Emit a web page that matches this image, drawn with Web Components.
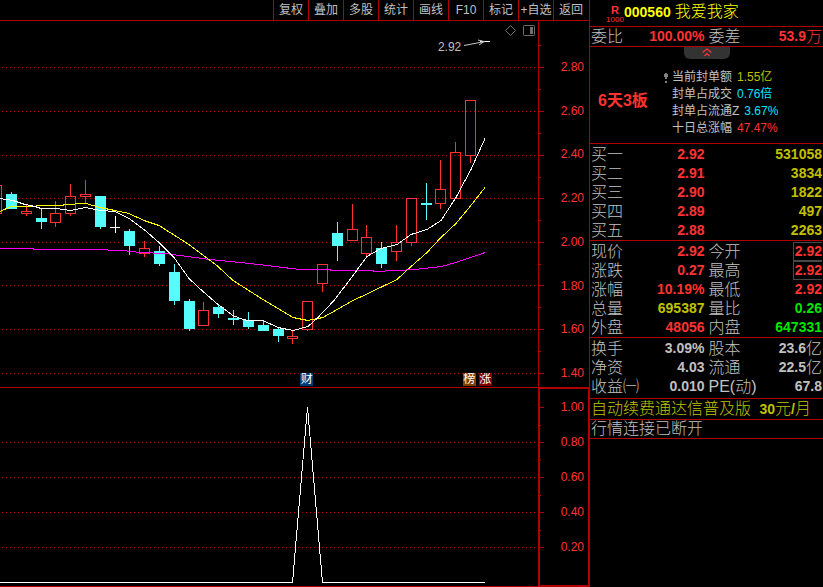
<!DOCTYPE html>
<html lang="zh-CN">
<head>
<meta charset="utf-8">
<title>我爱我家 000560</title>
<style>
html,body{margin:0;height:100%;background:#000}
body{font-family:"Liberation Sans","Noto Sans CJK SC",sans-serif;color:#c8c8c8;
--line:#b00000;--red:#ff3232;--yellow:#c0c000;--cyan:#00e6ff;--green:#00e600;--grey:#c0c0c0}
</style>
</head>
<body>
<stock-terminal></stock-terminal>
<script>
class Base extends HTMLElement{
  constructor(){super();this.attachShadow({mode:'open'})}
  connectedCallback(){this.shadowRoot.innerHTML='<style>'+this.css()+'</style>'+this.html()}
  css(){return ''}
  html(){return '<slot></slot>'}
}

customElements.define('tool-bar',class extends Base{
  css(){return `:host{display:flex;justify-content:flex-end;height:20px;border-bottom:1px solid var(--line);padding-right:1px}
  button{all:unset;box-sizing:border-box;width:35px;border-left:1px solid var(--line);font-size:12px;line-height:20px;text-align:center;white-space:nowrap;cursor:pointer;color:var(--grey)}`}
  html(){return this.getAttribute('items').split(',').map(t=>`<button type="button">${t}</button>`).join('')}
});

customElements.define('price-axis',class extends Base{
  css(){return `:host{display:grid;grid-template-columns:5px 1fr;grid-template-rows:minmax(0,1fr);box-sizing:border-box;border-left:1px solid var(--line)}
  :host([framed]){border:2px solid var(--line);border-right-width:1px}
  svg{width:5px;height:100%;display:block}
  ol{list-style:none;margin:0;padding:39px 5px 7px 0;display:flex;flex-direction:column;justify-content:space-between;text-align:right;font-size:12px;line-height:14px;color:var(--red)}
  :host([framed]) ol{padding:11px 4px 31px 0}`}
  html(){
    const framed=this.hasAttribute('framed'),h=framed?196:366;
    const major=framed?[18,53,88,123,158]:[46,90,134,177,221,264,308,352];
    const minor=framed?[36,71,106,141]:[24,68,112,156,199,243,286,330];
    const tick=(y,w)=>`<path d="M0 ${y+.5}H${w}"/>`;
    return `<svg viewBox="0 0 5 ${h}" preserveAspectRatio="none" stroke="#b00000" shape-rendering="crispEdges">${major.map(y=>tick(y,framed?4:5)).join('')}${minor.map(y=>tick(y,framed?1:2)).join('')}</svg>
    <ol>${this.getAttribute('values').split(',').map(v=>`<li>${v}</li>`).join('')}</ol>`;
  }
});

/* kind, left, body top, body bottom, high, low */
const CANDLES=[
['r',-9,185,213,185,213],['c',6,194,208,192,208],['r',21,211,213,205,215],['c',36,218,221,209,228],['r',50,213,222,201,226],
['r',65,196,213,184,215],['r',80,194,196,180,203],['c',95,196,226,196,228],['w',110,227,227,216,232],['c',124,231,245,229,254],
['r',139,248,253,241,256],['c',154,251,263,246,265],['c',169,272,300,264,304],['c',184,301,328,299,330],['r',198,310,325,302,325],
['c',213,307,313,305,317],['c',228,318,319,310,324],['c',243,320,326,312,328],['c',258,325,330,321,330],['c',273,329,335,327,341],
['r',287,336,338,330,343],['r',302,301,329,301,330],['r',317,264,283,264,291],['c',332,233,245,222,260],['r',347,229,240,204,240],
['r',361,237,253,225,256],['c',376,248,263,242,267],['r',391,242,251,225,260],['r',406,198,242,198,245],['c',421,203,204,183,219],
['r',435,189,203,160,208],['r',450,152,198,142,198],['r',465,100,155,100,162]];
const COLORS={r:'#ff3232',c:'#54fcfc',w:'#ffffff'};
const MA={
'#ffffff':'0,198 13,200 25,204 35,206 41,208 57,208 70,210 86,207 100,210 115,211 129,218 144,229 159,242 174,257 189,278 203,291 218,304 233,315 243,319 248,320 263,320 278,327 293,330 308,326 317,318 334,300 350,279 367,256 381,248 397,244 411,234 427,229 441,220 456,197 465,180 471,169 485,138',
'#ffff00':'0,211 11,206 62,205 65,204 86,203 100,207 115,210 129,213 144,220 159,225 170,232 189,244 218,266 233,280 263,299 293,317 308,320 323,317 330,313 353,300 368,293 397,279 411,266 427,252 441,237 456,223 470,206 485,187',
'#ff00ff':'0,248 33,248 34,249 92,249 123,250 140,252 165,253 180,255 210,259 250,263 300,269 330,269 331,270 373,270 374,271 397,270 415,269 441,266 456,262 485,252'};

customElements.define('candle-chart',class extends Base{
  css(){return `:host{display:block;position:relative;overflow:hidden;min-height:0}
  svg.plot{display:block;width:100%;height:100%}
  .peak{position:absolute;left:81.4%;top:5.2%;font-size:12px;line-height:14px;color:var(--grey)}
  .tag{position:absolute;bottom:1px;font-size:12px;line-height:13px;width:13px;height:13px;overflow:hidden;text-align:center;color:#fff}
  .tools{position:absolute;right:2px;top:3px;display:flex;gap:6px}
  .tools button{all:unset;display:block;height:13px;cursor:pointer}.tools svg{display:block}`}
  html(){
    const grid=[67,111,155,198,242,285,329,373].map(y=>`<path d="M2 ${y+.5}H538" stroke="#b00000" stroke-dasharray="1 3"/>`).join('');
    const bars=CANDLES.map(([k,x,t,b,hi,lo])=>{
      const c=COLORS[k],m=x+5;
      let s='';
      if(k==='r'){
        s+=`<rect x="${x+.5}" y="${t+.5}" width="10" height="${b-t}" fill="none" stroke="${c}"/>`;
        if(hi<t)s+=`<rect x="${m}" y="${hi}" width="1" height="${t-hi}" fill="${c}"/>`;
        if(lo>b)s+=`<rect x="${m}" y="${b+1}" width="1" height="${lo-b}" fill="${c}"/>`;
      }else{
        s+=`<rect x="${x}" y="${t}" width="${k==='w'?10:11}" height="${b-t+1}" fill="${c}"/><rect x="${m}" y="${hi}" width="1" height="${lo-hi+1}" fill="${c}"/>`;
      }
      return s}).join('');
    const lines=Object.entries(MA).reverse().map(([c,p])=>`<polyline points="${p}" transform="translate(0 .5)" fill="none" stroke="${c}"/>`).join('');
    return `<svg class="plot" viewBox="0 21 538 366" preserveAspectRatio="none" shape-rendering="crispEdges" aria-hidden="true">${grid}${bars}${lines}
      <path d="M480 41.5H490" stroke="#fff"/><g stroke="#c8c8c8" fill="none" shape-rendering="auto"><path d="M464 45.5L485 41.5M478 40L484 41.5L479 45"/></g></svg>
    <span class="peak">2.92</span>
    <span class="tag" style="left:55.8%;background:#003c74">财</span>
    <span class="tag" style="left:86%;background:#804000">榜</span>
    <span class="tag" style="left:89%;background:#800000">涨</span>
    <div class="tools"><button type="button" aria-label="标记"><svg width="13" height="13" fill="none" stroke="#707070"><path d="M6.5 1.5L11.5 6.5L6.5 11.5L1.5 6.5Z"/></svg></button>
    <button type="button" aria-label="侧栏"><svg width="13" height="13"><rect x=".5" y="1.5" width="11" height="10" rx="1" fill="none" stroke="#707070"/><rect x="7" y="3" width="3" height="7" fill="#707070"/></svg></button></div>`;
  }
});

customElements.define('signal-chart',class extends Base{
  css(){return `:host{display:block;min-height:0;overflow:hidden;border:solid var(--line);border-width:1px 0}
  svg{display:block;width:100%;height:100%}`}
  html(){return `<svg viewBox="0 388 538 198" preserveAspectRatio="none" shape-rendering="crispEdges" aria-hidden="true">
  ${[442,477,512,547].map(y=>`<path d="M2 ${y+.5}H538" stroke="#b00000" stroke-dasharray="1 3"/>`).join('')}
  <polyline points="0,582.5 292.5,582.5 307.5,407 322.5,582.5 485,582.5" fill="none" stroke="#fff"/></svg>`}
});

customElements.define('quote-block',class extends Base{
  css(){return `:host{display:block;border-bottom:1px solid var(--line);padding:1px 1px 0}`}
});
customElements.define('quote-row',class extends Base{
  css(){return `:host{display:grid;grid-template-columns:1fr 1fr;column-gap:4px;line-height:19px;height:19px}`}
});
customElements.define('quote-cell',class extends Base{
  css(){return `:host{display:flex;justify-content:space-between;align-items:center;font-size:16px;font-weight:300;white-space:nowrap;color:var(--grey)}
  .v{display:flex;align-items:center;font-weight:bold;font-size:14px;color:var(--tone,var(--grey))}
  .u{font-weight:300;font-size:16px}
  :host([tone=red]){--tone:var(--red)}:host([tone=yellow]){--tone:var(--yellow)}:host([tone=green]){--tone:var(--green)}
  :host([boxed]) .v{box-sizing:border-box;height:19px;border:1px solid #484848;border-right:0;padding-left:1px}`}
  html(){
    const l=this.getAttribute('label')||'',v=this.getAttribute('value')||'',u=this.getAttribute('unit')||'';
    return `<span>${l}</span><span class="v">${v}${u?`<span class="u">${u}</span>`:''}</span>`;
  }
});

customElements.define('stock-title',class extends Base{
  css(){return `:host{display:flex;align-items:center;height:26px;padding-left:16px;border-bottom:1px solid var(--line);color:#ff0}
  .r{display:flex;flex-direction:column;align-items:center;width:18px;color:var(--red);font-size:8px;line-height:9px;margin-top:3px}
  .r b{font-size:11px}
  h1{display:flex;align-items:center;gap:4px;margin:0;font-size:16px;line-height:24px;padding-bottom:2px;font-weight:300}
  h1 b{font-size:14px;font-weight:700}`}
  html(){return `<span class="r"><b>R</b><span>1000</span></span><h1><b>000560</b><span>我爱我家</span></h1>`}
});

customElements.define('limit-summary',class extends Base{
  css(){return `:host{display:flex;align-items:center;position:relative;height:96px;border-bottom:1px solid var(--line)}
  .tab{all:unset;position:absolute;top:0;left:50%;transform:translateX(-50%);width:46px;height:12px;background:#333;border-radius:0 0 6px 6px;display:flex;justify-content:center;cursor:pointer}
  strong{width:74px;padding:8px 0 0 8px;box-sizing:border-box;font-size:16px;white-space:nowrap;color:var(--red)}
  ul{list-style:none;margin:0;padding:18px 0 2px;font-size:12px;line-height:17px;color:var(--grey)}
  li{display:flex;gap:5px;white-space:nowrap}
  .i{width:8px;display:flex;align-items:center}
  .n{display:flex}
  .y{color:var(--yellow)}.c{color:var(--cyan)}.d{color:var(--red)}`}
  html(){
    const pin='<svg width="4" height="10" fill="#808080"><path d="M1 0h2v1h1v3H3v2H1V4H0V1h1zM1 8h2v2H1z"/></svg>';
    return `<button class="tab" type="button" aria-label="收起"><svg width="12" height="12" fill="none" stroke="#ff3232" stroke-width="1.2"><path d="M1.5 5.5L6 2L10.5 5.5M3.5 9L6 6.5L8.5 9"/></svg></button>
    <strong>6天3板</strong>
    <ul>${[['当前封单额','1.55亿','y',pin],['封单占成交','0.76倍','c',''],['封单占流通Z','3.67%','c',''],['十日总涨幅','47.47%','d','']].map(([l,v,k,i])=>`<li><span class="n"><span class="i">${i}</span>${l}</span><span class="${k}">${v}</span></li>`).join('')}</ul>`;
  }
});

customElements.define('notice-line',class extends Base{
  css(){return `:host{display:block;border-bottom:1px solid var(--line);padding-left:1px;font-size:16px;font-weight:300;line-height:18px;height:18px;white-space:nowrap;color:var(--grey)}
  :host([promo]){color:var(--yellow);line-height:20px;height:20px}`}
});

customElements.define('stock-terminal',class extends Base{
  css(){return `:host{display:grid;grid-template-columns:minmax(0,1fr) 234px;height:100vh;background:#000}
  main{display:grid;grid-template-columns:minmax(0,1fr) 51px;grid-template-rows:auto minmax(0,366fr) minmax(0,200fr);min-width:0}
  tool-bar{grid-column:1/-1}
  aside{border-left:1px solid var(--line);overflow:hidden}
  .first{padding-top:0}
  .last{padding-bottom:2px}
  a{color:inherit;text-decoration:none}
  a span{margin-left:4px}
  b{font-size:14px;font-weight:700}`}
  html(){
    const c=(l,v,t='',u='',x='')=>`<quote-cell label="${l}" value="${v}" tone="${t}" unit="${u}" ${x}></quote-cell>`;
    const rows=a=>a.map(r=>`<quote-row>${r.map(q=>c(...q)).join('')}</quote-row>`).join('');
    return `<main><tool-bar items="复权,叠加,多股,统计,画线,F10,标记,+自选,返回"></tool-bar>
    <candle-chart></candle-chart><price-axis values="2.80,2.60,2.40,2.20,2.00,1.80,1.60,1.40"></price-axis>
    <signal-chart></signal-chart><price-axis framed values="1.00,0.80,0.60,0.40,0.20"></price-axis></main>
    <aside><stock-title></stock-title>
    <quote-block class="first">${rows([[['委比','100.00%','red'],['委差','53.9','red','万']]])}</quote-block>
    <limit-summary></limit-summary>
    <quote-block>${rows([['一','2.92','531058'],['二','2.91','3834'],['三','2.90','1822'],['四','2.89','497'],['五','2.88','2263']].map(([n,p,v])=>[['买'+n,p,'red'],['',v,'yellow']]))}</quote-block>
    <quote-block>${rows([[['现价','2.92','red'],['今开','2.92','red','','boxed']],[['涨跌','0.27','red'],['最高','2.92','red','','boxed']],[['涨幅','10.19%','red'],['最低','2.92','red']],[['总量','695387','yellow'],['量比','0.26','green']],[['外盘','48056','red'],['内盘','647331','green']]])}</quote-block>
    <quote-block class="last">${rows([[['换手','3.09%'],['股本','23.6','','亿']],[['净资','4.03'],['流通','22.5','','亿']],[['收益㈠','0.010'],['PE(动)','67.8']]])}</quote-block>
    <notice-line promo><a href="#renew">自动续费通达信普及版 <span><b>30</b>元<b>/</b>月</span></a></notice-line>
    <notice-line>行情连接已断开</notice-line></aside>`;
  }
});
</script>
</body>
</html>
